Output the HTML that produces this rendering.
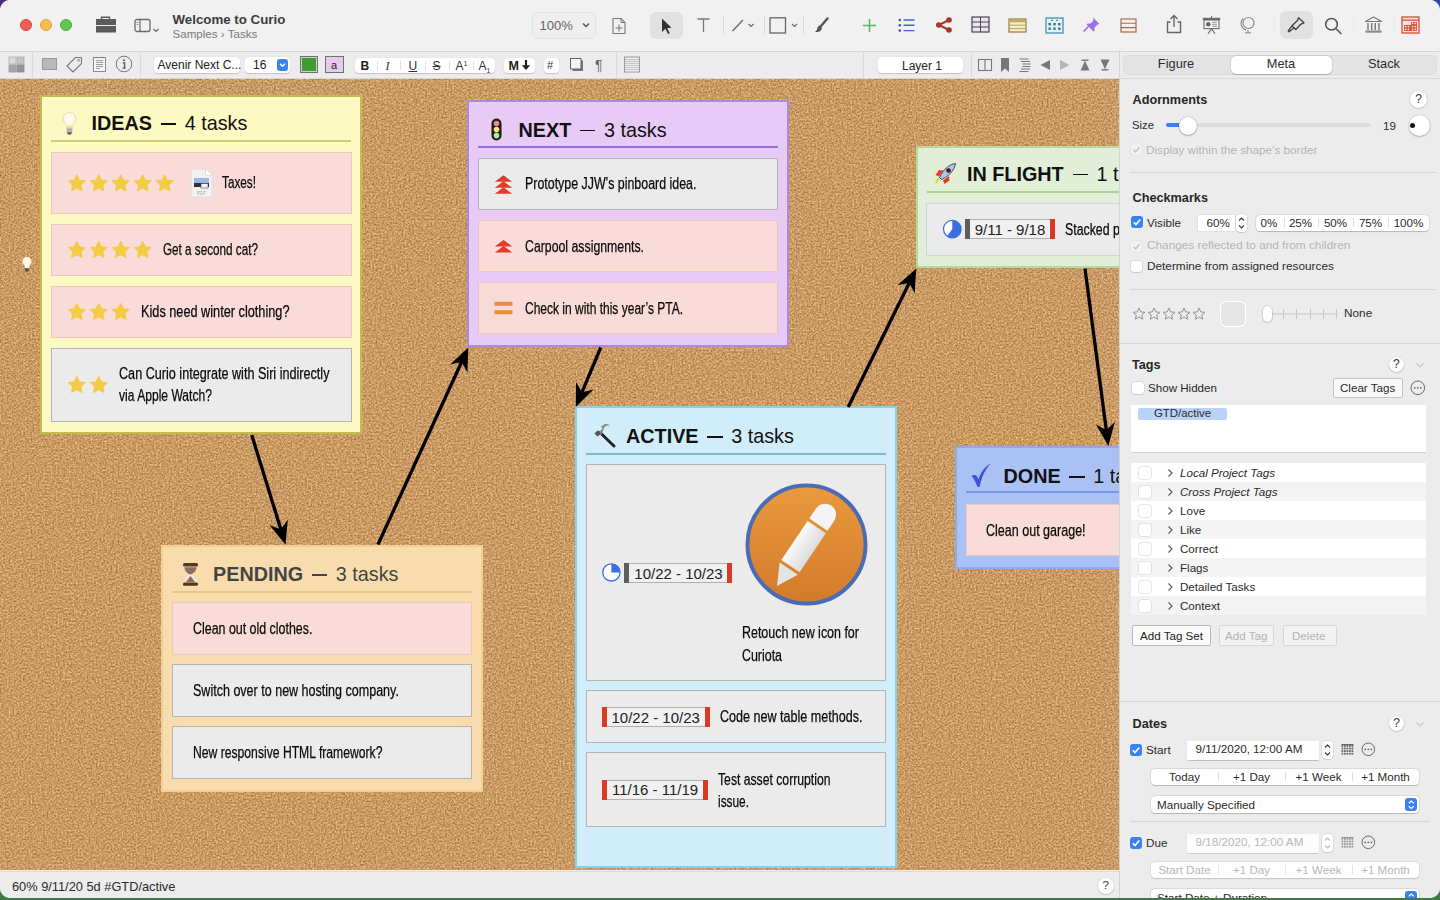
<!DOCTYPE html>
<html><head><meta charset="utf-8">
<style>
*{box-sizing:border-box;margin:0;padding:0}
html,body{width:1440px;height:900px;overflow:hidden;font-family:"Liberation Sans",sans-serif;}
body{background:linear-gradient(180deg,rgba(0,0,0,0) 50%,#3d7a42 50%),linear-gradient(90deg,#4b2f7a 0%,#3a3d8a 60%,#2f4aa8 100%);position:relative}
#desk-bottom{position:absolute;left:0;right:0;bottom:0;height:4px;background:#3f7a44}
.abs{position:absolute}
#win{position:absolute;left:0;top:0;width:1440px;height:898px;border-radius:10px;overflow:hidden;background:#ececec}
#toolbar{position:absolute;left:0;top:0;width:1440px;height:51px;background:#f0f1f0}
#fmtbar{position:absolute;left:0;top:51px;width:1119px;height:28px;background:#ececec;border-bottom:1px solid #d8d8d8}
#canvas{position:absolute;left:0;top:79px;width:1119px;height:791px;background:#c99b62;overflow:hidden}
#status{position:absolute;left:0;top:870.5px;width:1119px;height:27.5px;background:#ececec;border-top:1px solid #dcdcdc}
#sidec{position:absolute;left:0;top:0;width:1440px;height:898px;pointer-events:none}
#side{position:absolute;left:1119px;top:51px;width:321px;height:847px;background:#ececec;border-left:1px solid #d4d4d4}

#cv{position:absolute;left:0;top:79px;width:1119px;height:791px;overflow:hidden;background:#c99b62}
#cvi{position:absolute;left:0;top:-79px;width:1440px;height:900px}
.card{position:absolute;border:2px solid}
.ul{position:absolute;height:2px}
.tk{position:absolute;border:1px solid}
.pk{background:#f9dcda;border-color:#efc6b8}
.gy{background:#ebebeb;border-color:#b4b4b4}
.hd{position:absolute;margin:0.8px 0 0 -1px;font-size:19.8px;color:#111;white-space:nowrap;line-height:1}
.hd b{font-weight:bold}
.dash{display:inline-block;width:15.3px;height:1.7px;background:currentColor;vertical-align:5.6px;margin:0 8.6px 0 8.8px}
.ct{position:absolute;font-size:16px;color:#0a0a0a;-webkit-text-stroke:0.25px #0a0a0a;white-space:nowrap;line-height:1;transform-origin:0 0}
.chip{position:absolute;height:20px;background:#f2f2f2;border:1px solid #b9b9b9;border-left:5px solid #5c5c5c;border-right:5px solid #d83a2a;font-size:14.5px;color:#222;line-height:18px;padding-left:5px;white-space:nowrap}
.t{position:absolute;white-space:nowrap;line-height:1}
</style></head>
<body>
<div id="desk-bottom"></div>
<div id="win">
  <div id="toolbar">
<div class="abs" style="left:20px;top:19px;width:12px;height:12px;border-radius:50%;background:#ee5f58;border:0.5px solid #d8463f"></div>
<div class="abs" style="left:40px;top:19px;width:12px;height:12px;border-radius:50%;background:#f6bd4f;border:0.5px solid #dea236"></div>
<div class="abs" style="left:60px;top:19px;width:12px;height:12px;border-radius:50%;background:#61c554;border:0.5px solid #4fa83f"></div>
<svg class="abs" style="left:95px;top:16px" width="22" height="18" viewBox="0 0 22 18">
<path d="M6.5 3V1.2h8V3" fill="none" stroke="#5b5b5b" stroke-width="1.4"/>
<rect x="1" y="3" width="20" height="6" fill="#5b5b5b"/>
<rect x="1" y="10" width="20" height="6.5" fill="#5b5b5b"/>
</svg>
<svg class="abs" style="left:133px;top:17px" width="28" height="17" viewBox="0 0 28 17">
<rect x="2" y="2.5" width="15" height="12" rx="2" fill="none" stroke="#6a6a6a" stroke-width="1.3"/>
<line x1="7" y1="2.5" x2="7" y2="14.5" stroke="#6a6a6a" stroke-width="1.2"/>
<line x1="3.8" y1="5.5" x2="5.3" y2="5.5" stroke="#6a6a6a" stroke-width="0.9"/>
<line x1="3.8" y1="7.5" x2="5.3" y2="7.5" stroke="#6a6a6a" stroke-width="0.9"/>
<path d="M20.5 12l2.5 2.5 2.5-2.5" fill="none" stroke="#6a6a6a" stroke-width="1.2"/>
</svg>
<div class="t" style="left:172.5px;top:13px;font-size:13.3px;font-weight:bold;color:#3c3c3c">Welcome to Curio</div>
<div class="t" style="left:172.5px;top:28px;font-size:11.6px;color:#7a7a7a">Samples › Tasks</div>
<div class="abs" style="left:531.5px;top:11.5px;width:64px;height:27px;border-radius:6px;border:1px solid #e2e2e2;background:#efefef"></div>
<div class="t" style="left:539.5px;top:18.5px;font-size:13px;color:#666">100%</div>
<svg class="abs" style="left:581px;top:21px" width="10" height="8" viewBox="0 0 10 8"><path d="M2 2.5l3 3 3-3" fill="none" stroke="#555" stroke-width="1.4"/></svg>
<svg class="abs" style="left:611px;top:17px" width="17" height="18" viewBox="0 0 17 18">
<path d="M2 1.5h8l4 4v11h-12z" fill="none" stroke="#777" stroke-width="1.1"/>
<path d="M10 1.5v4h4" fill="none" stroke="#777" stroke-width="1"/>
<path d="M8 7.5v7M4.5 11h7" stroke="#777" stroke-width="1.1"/>
</svg>
<div class="abs" style="left:650px;top:11.5px;width:33px;height:27px;border-radius:6px;background:#e1e1e1"></div>
<svg class="abs" style="left:660px;top:17px" width="14" height="18" viewBox="0 0 14 18"><path d="M2 1.5l9.5 9.2-4.3.2 2.6 5.3-1.8.9-2.6-5.3L2 15z" fill="#333"/></svg>
<svg class="abs" style="left:696px;top:17px" width="15" height="16" viewBox="0 0 15 16"><path d="M1.5 2h12M7.5 2v13" stroke="#777" stroke-width="1.3" fill="none"/></svg>
<div class="abs" style="left:723px;top:15px;width:1px;height:20px;background:#dcdcdc"></div>
<svg class="abs" style="left:731px;top:17px" width="26" height="16" viewBox="0 0 26 16"><path d="M1.5 14L12 3" stroke="#666" stroke-width="1.3"/><path d="M17.5 7l2.5 2.5 2.5-2.5" fill="none" stroke="#666" stroke-width="1.2"/></svg>
<div class="abs" style="left:763.5px;top:15px;width:1px;height:20px;background:#dcdcdc"></div>
<svg class="abs" style="left:769px;top:17px" width="30" height="17" viewBox="0 0 30 17"><rect x="1" y="0.8" width="15.5" height="15.2" fill="none" stroke="#666" stroke-width="1.3"/><path d="M23 7l2.5 2.5 2.5-2.5" fill="none" stroke="#666" stroke-width="1.2"/></svg>
<div class="abs" style="left:803px;top:15px;width:1px;height:20px;background:#dcdcdc"></div>
<svg class="abs" style="left:814px;top:17px" width="15" height="16" viewBox="0 0 15 16"><path d="M13.5 1.5L7 9" stroke="#555" stroke-width="2.4" stroke-linecap="round"/><path d="M6.5 8.5c-2 0-3 1.5-3.3 3.2-.3 1.6-1.4 2.8-2.4 3.3 2.8.4 5.6-.6 6.7-2.6.6-1.2.4-2.6-1-3.9z" fill="#555"/></svg>
<svg class="abs" style="left:862px;top:18px" width="15" height="15" viewBox="0 0 15 15"><path d="M7.5 1v13M1 7.5h13" stroke="#5cb85a" stroke-width="1.5"/></svg>
<svg class="abs" style="left:898px;top:18px" width="17" height="15" viewBox="0 0 17 15">
<g fill="#3a55c8"><circle cx="1.8" cy="2" r="1.3"/><circle cx="1.8" cy="7.3" r="1.3"/><circle cx="1.8" cy="12.6" r="1.3"/></g>
<g stroke="#4a64d0" stroke-width="1.4"><path d="M5.5 2h11M5.5 7.3h11M5.5 12.6h11"/></g></svg>
<svg class="abs" style="left:935px;top:17px" width="18" height="16" viewBox="0 0 18 16">
<path d="M14 3L4 8l10 5" stroke="#a83528" stroke-width="2" fill="none"/>
<circle cx="14" cy="3" r="2.8" fill="#a83528"/><circle cx="3.8" cy="8" r="2.8" fill="#a83528"/><circle cx="14" cy="13" r="2.8" fill="#a83528"/></svg>
<svg class="abs" style="left:971px;top:16px" width="19" height="17" viewBox="0 0 19 17">
<rect x="1" y="1" width="17" height="15" fill="#ece4f0" stroke="#4a4450" stroke-width="1.2"/>
<path d="M9.5 1v15M1 6h17M1 11h17" stroke="#4a4450" stroke-width="1"/></svg>
<svg class="abs" style="left:1008px;top:18px" width="19" height="15" viewBox="0 0 19 15">
<rect x="1" y="1" width="17" height="13" fill="#f6eec8" stroke="#8f7d40" stroke-width="1.2"/>
<rect x="1.5" y="1.5" width="16" height="2.8" fill="#c0a860"/>
<path d="M1 7.2h17M1 10.6h17" stroke="#b09a58" stroke-width="0.9"/></svg>
<svg class="abs" style="left:1045px;top:17px" width="19" height="17" viewBox="0 0 19 17">
<rect x="1" y="1" width="17" height="15" fill="#e4f2f6" stroke="#3a8aa8" stroke-width="1.2"/>
<g fill="#2a7890"><rect x="3.5" y="6" width="2.4" height="2.4"/><rect x="8.3" y="6" width="2.4" height="2.4"/><rect x="13.1" y="6" width="2.4" height="2.4"/>
<rect x="3.5" y="10.5" width="2.4" height="2.4"/><rect x="8.3" y="10.5" width="2.4" height="2.4"/><rect x="13.1" y="10.5" width="2.4" height="2.4"/>
<rect x="6" y="2.8" width="2" height="1"/><rect x="11" y="2.8" width="2" height="1"/></g></svg>
<svg class="abs" style="left:1082px;top:16px" width="19" height="17" viewBox="0 0 19 17">
<path d="M11 1.5l6.5 6.5-2 .6-3 3 .2 2.8-1.2 1.2-7-7 1.2-1.2 2.8.2 3-3z" fill="#9b6fe8"/>
<path d="M6.5 10.5L1.5 15.5" stroke="#9b6fe8" stroke-width="1.6"/></svg>
<svg class="abs" style="left:1120px;top:18px" width="17" height="15" viewBox="0 0 17 15">
<rect x="1" y="1" width="15" height="13" fill="#faf0ea" stroke="#a66a50" stroke-width="1.2"/>
<path d="M1 5.3h15M1 9.6h15" stroke="#a66a50" stroke-width="1.1"/></svg>
<svg class="abs" style="left:1165px;top:14px" width="18" height="20" viewBox="0 0 18 20">
<path d="M5.5 8H2.5v10.5h13V8h-3" fill="none" stroke="#666" stroke-width="1.4"/>
<path d="M9 13V1.5M5.5 5L9 1.5 12.5 5" fill="none" stroke="#666" stroke-width="1.4"/></svg>
<svg class="abs" style="left:1202px;top:16px" width="19" height="19" viewBox="0 0 19 19">
<rect x="0.8" y="1.8" width="17.4" height="2.2" fill="#6a6a6a"/><path d="M9.5 0v2" stroke="#6a6a6a" stroke-width="1"/>
<rect x="2" y="4" width="15" height="8.6" fill="#f6f6f6" stroke="#6a6a6a" stroke-width="1.1"/>
<circle cx="6.3" cy="8.2" r="2.3" fill="#666"/><path d="M10 6.3h5M10 8.3h5M10 10.3h5" stroke="#8a8a8a" stroke-width="0.9"/>
<path d="M9.5 12.6l-3.5 5.2M9.5 12.6l3.5 5.2" stroke="#6a6a6a" stroke-width="1.1"/></svg>
<svg class="abs" style="left:1240px;top:16px" width="16" height="18" viewBox="0 0 16 18">
<circle cx="8.5" cy="7" r="5.5" fill="none" stroke="#888" stroke-width="1.2"/>
<path d="M3 2.5a7 7 0 0 0 3 11.5" fill="none" stroke="#888" stroke-width="1.1"/>
<path d="M8 14v2.5M5 16.8h6" stroke="#888" stroke-width="1.1"/></svg>
<div class="abs" style="left:1273.5px;top:15px;width:1px;height:20px;background:#e9e9e9"></div>
<div class="abs" style="left:1280px;top:11px;width:33px;height:28px;border-radius:6px;background:#e1e1e1"></div>
<svg class="abs" style="left:1286px;top:16px" width="20" height="18" viewBox="0 0 20 18">
<path d="M12.5 1.8l5.5 5-3 1.3-5.2 5.5-3.8-3.8 5.5-5.2z" fill="none" stroke="#444" stroke-width="1.4" stroke-linejoin="round"/>
<path d="M6 9.8L2.2 14.8l.8 1 5-3.8" fill="none" stroke="#444" stroke-width="1.4" stroke-linejoin="round"/></svg>
<svg class="abs" style="left:1324px;top:17px" width="19" height="18" viewBox="0 0 19 18">
<circle cx="7.5" cy="7.2" r="5.8" fill="none" stroke="#555" stroke-width="1.5"/>
<path d="M11.8 11.5l5.5 5.5" stroke="#555" stroke-width="1.6"/></svg>
<div class="abs" style="left:1353px;top:15px;width:1px;height:20px;background:#e9e9e9"></div>
<svg class="abs" style="left:1364px;top:16px" width="19" height="18" viewBox="0 0 19 18">
<path d="M9.5 1L1.5 5.5h16z" fill="none" stroke="#777" stroke-width="1.2" stroke-linejoin="round"/>
<path d="M4 7v7M7.7 7v7M11.3 7v7M15 7v7" stroke="#777" stroke-width="1.4"/>
<rect x="1.5" y="14.5" width="16" height="2.2" fill="#888"/></svg>
<div class="abs" style="left:1393.5px;top:15px;width:1px;height:20px;background:#e9e9e9"></div>
<svg class="abs" style="left:1401px;top:16px" width="19" height="18" viewBox="0 0 19 18">
<rect x="1" y="1" width="17" height="16" fill="#fce4de" stroke="#d84a32" stroke-width="1.3"/>
<path d="M1 4.2h17" stroke="#d84a32" stroke-width="1.2"/>
<g fill="#d84a32"><rect x="10" y="6" width="6" height="3"/><rect x="3" y="9" width="13" height="6"/></g>
<g fill="#fce4de"><rect x="10.8" y="6.6" width="1.6" height="1.6"/><rect x="13.6" y="6.6" width="1.6" height="1.6"/>
<rect x="3.8" y="9.8" width="1.6" height="1.6"/><rect x="6.7" y="9.8" width="1.6" height="1.6"/><rect x="10.8" y="9.8" width="1.6" height="1.6"/><rect x="13.6" y="9.8" width="1.6" height="1.6"/>
<rect x="3.8" y="12.6" width="1.6" height="1.6"/><rect x="6.7" y="12.6" width="1.6" height="1.6"/><rect x="10.8" y="12.6" width="1.6" height="1.6"/><rect x="13.6" y="12.6" width="1.6" height="1.6"/></g></svg>
</div>
  <div id="fmtbar">
<svg class="abs" style="left:8px;top:5px" width="17" height="17" viewBox="0 0 17 17">
<rect x="1" y="1" width="7" height="7" fill="#dcdcdc" stroke="#b0b0b0" stroke-width="0.8"/>
<rect x="9" y="1" width="7" height="7" fill="#c4c4c4" stroke="#aaa" stroke-width="0.8"/>
<rect x="1" y="9" width="7" height="7" fill="#a6a6a6" stroke="#999" stroke-width="0.8"/>
<rect x="9" y="9" width="7" height="7" fill="#969696" stroke="#8a8a8a" stroke-width="0.8"/></svg>
<div class="abs" style="left:32px;top:0;width:1px;height:27px;background:#dadada"></div>
<div class="abs" style="left:41.5px;top:7px;width:15.5px;height:12px;background:#b8b8b8;border:1px solid #9a9a9a"></div>
<svg class="abs" style="left:66px;top:5px" width="17" height="17" viewBox="0 0 17 17">
<path d="M9.5 1.5h6v6l-8.5 8.5-6-6z" fill="none" stroke="#7a7a7a" stroke-width="1.1" stroke-linejoin="round"/>
<circle cx="12.6" cy="4.3" r="1" fill="none" stroke="#7a7a7a" stroke-width="0.8"/></svg>
<svg class="abs" style="left:92px;top:5px" width="15" height="17" viewBox="0 0 15 17">
<rect x="1.5" y="1.5" width="12" height="14" fill="#f6f6f6" stroke="#8a8a8a" stroke-width="1"/>
<path d="M4 4.5h7M4 6.5h7M4 8.5h7M4 10.5h7M4 12.5h4" stroke="#9a9a9a" stroke-width="1"/>
<path d="M3 1v1.2M5 1v1.2M7 1v1.2M9 1v1.2M11 1v1.2" stroke="#777" stroke-width="0.7"/></svg>
<svg class="abs" style="left:115px;top:4px" width="18" height="18" viewBox="0 0 18 18">
<circle cx="9" cy="9" r="7.8" fill="none" stroke="#7a7a7a" stroke-width="1"/>
<circle cx="9" cy="5.3" r="1" fill="#555"/><path d="M7.7 7.8h1.9v5.2M7.6 13.2h3" stroke="#555" stroke-width="1.3" fill="none"/></svg>
<div class="abs" style="left:140px;top:0;width:1px;height:27px;background:#dadada"></div>
<div class="abs" style="left:154px;top:6px;width:86px;height:15.5px;border-radius:4px;background:#fff;box-shadow:0 0.5px 1px rgba(0,0,0,0.18)"></div>
<div class="t" style="left:157.5px;top:8px;font-size:12px;color:#222">Avenir Next C...</div>
<div class="abs" style="left:245px;top:6px;width:45px;height:15.5px;border-radius:4px;background:#fff;box-shadow:0 0.5px 1px rgba(0,0,0,0.18)"></div>
<div class="t" style="left:253px;top:8px;font-size:12px;color:#222">16</div>
<div class="abs" style="left:276.5px;top:8px;width:11.5px;height:12px;border-radius:3px;background:#3b82f0"></div>
<svg class="abs" style="left:277px;top:9px" width="11" height="10" viewBox="0 0 11 10"><path d="M3 3.8l2.5 2.5 2.5-2.5" fill="none" stroke="#fff" stroke-width="1.3"/></svg>
<div class="abs" style="left:299.5px;top:5px;width:18.5px;height:16.5px;background:#3f9c2e;border:1.5px solid #707070;box-shadow:inset 0 0 0 1px #d0d0d0"></div>
<div class="abs" style="left:325px;top:5px;width:19px;height:16.5px;background:#e9c8f0;border:1.5px solid #707070;box-shadow:inset 0 0 0 1px #d8d8d8"></div>
<div class="t" style="left:331px;top:8.5px;font-size:11px;color:#222">a</div>
<div class="abs" style="left:354.5px;top:6.5px;width:140px;height:15.5px;border-radius:4px;background:#fff;box-shadow:0 0.5px 1px rgba(0,0,0,0.18)"></div>
<div class="abs" style="left:377px;top:10px;width:1px;height:9px;background:#e0e0e0"></div>
<div class="abs" style="left:400px;top:10px;width:1px;height:9px;background:#e0e0e0"></div>
<div class="abs" style="left:424.5px;top:10px;width:1px;height:9px;background:#e0e0e0"></div>
<div class="abs" style="left:449px;top:10px;width:1px;height:9px;background:#e0e0e0"></div>
<div class="abs" style="left:473px;top:10px;width:1px;height:9px;background:#e0e0e0"></div>
<div class="t" style="left:360.5px;top:8.5px;font-size:12px;font-weight:bold;color:#222">B</div>
<div class="t" style="left:385.5px;top:8.5px;font-size:12px;font-style:italic;color:#333;font-family:'Liberation Serif',serif">I</div>
<div class="t" style="left:408.5px;top:8.5px;font-size:12px;text-decoration:underline;color:#333">U</div>
<div class="t" style="left:432.5px;top:8.5px;font-size:12px;text-decoration:line-through;color:#333">S</div>
<div class="t" style="left:455.5px;top:8.5px;font-size:12px;color:#333">A<span style="font-size:7px;position:relative;top:-4px">1</span></div>
<div class="t" style="left:478.5px;top:8.5px;font-size:12px;color:#333">A<span style="font-size:7px;position:relative;top:3px">1</span></div>
<div class="abs" style="left:504px;top:6.5px;width:31px;height:15.5px;border-radius:4px;background:#fff;box-shadow:0 0.5px 1px rgba(0,0,0,0.18)"></div>
<div class="t" style="left:508.5px;top:8.5px;font-size:12.5px;font-weight:bold;color:#222">M</div><svg class="abs" style="left:521px;top:8px" width="10" height="12" viewBox="0 0 10 12"><path d="M5 1v7" stroke="#222" stroke-width="2.2"/><path d="M0.8 6.2h8.4L5 11z" fill="#222"/></svg>
<div class="abs" style="left:543.5px;top:6.5px;width:15.5px;height:15.5px;border-radius:4px;background:#fff;box-shadow:0 0.5px 1px rgba(0,0,0,0.18)"></div>
<div class="t" style="left:547px;top:9px;font-size:11px;color:#333">#</div>
<svg class="abs" style="left:569px;top:6px" width="16" height="16" viewBox="0 0 16 16">
<rect x="3.5" y="3.5" width="10.5" height="10.5" fill="#777"/><rect x="1.5" y="1.5" width="10.5" height="10.5" fill="#f4f4f4" stroke="#666" stroke-width="1"/></svg>
<div class="t" style="left:595px;top:7px;font-size:14px;color:#666">¶</div>
<div class="abs" style="left:615.5px;top:0;width:1px;height:27px;background:#dadada"></div>
<svg class="abs" style="left:623px;top:5px" width="18" height="17" viewBox="0 0 18 17">
<rect x="1.5" y="1" width="15" height="15" fill="#f0f0f0" stroke="#9a9a9a" stroke-width="1"/>
<path d="M2 3.5h14M2 5.5h14M2 7.5h14M2 9.5h14M2 11.5h14M2 13.5h14" stroke="#b8b8b8" stroke-width="0.8"/></svg>
<div class="abs" style="left:863px;top:0;width:1px;height:27px;background:#dadada"></div>
<div class="abs" style="left:878px;top:6px;width:85px;height:16px;border-radius:4px;background:#fff;box-shadow:0 0.5px 1px rgba(0,0,0,0.18)"></div>
<div class="t" style="left:902px;top:8.5px;font-size:12px;color:#222">Layer 1</div>
<div class="abs" style="left:970.5px;top:0;width:1px;height:27px;background:#dadada"></div>
<svg class="abs" style="left:977px;top:7px" width="16" height="14" viewBox="0 0 16 14">
<rect x="1.5" y="1.5" width="13" height="11" fill="none" stroke="#777" stroke-width="1.1"/><path d="M8 1.5v11" stroke="#777" stroke-width="1.1"/></svg>
<svg class="abs" style="left:1000px;top:6px" width="10" height="16" viewBox="0 0 10 16"><path d="M1 1h8v14L5 11.5 1 15z" fill="#777"/></svg>
<svg class="abs" style="left:1018px;top:6px" width="14" height="16" viewBox="0 0 14 16">
<path d="M1.5 2h9M3 4.5h9M4.5 7h8M4.5 9.5h8M3 12h9M1.5 14.5h9" stroke="#777" stroke-width="1"/></svg>
<svg class="abs" style="left:1039px;top:8px" width="12" height="12" viewBox="0 0 12 12"><path d="M11 1v10L1.5 6z" fill="#777"/></svg>
<svg class="abs" style="left:1059px;top:8px" width="12" height="12" viewBox="0 0 12 12"><path d="M1 1v10L10.5 6z" fill="#b5b5b5"/></svg>
<svg class="abs" style="left:1079px;top:7px" width="12" height="14" viewBox="0 0 12 14"><path d="M2.5 2.2h7" stroke="#777" stroke-width="1.4"/><path d="M6 2.8L10.5 12.5h-9z" fill="#777"/></svg>
<svg class="abs" style="left:1099px;top:7px" width="12" height="14" viewBox="0 0 12 14"><path d="M2.5 11.8h7" stroke="#777" stroke-width="1.4"/><path d="M6 11.2L10.5 1.5h-9z" fill="#777"/></svg>
</div>
  <div id="cv"><svg class="abs" style="left:0;top:0" width="1119" height="791"><filter id="cork" x="0" y="0" width="100%" height="100%" color-interpolation-filters="sRGB"><feTurbulence type="fractalNoise" baseFrequency="0.55" numOctaves="2" seed="11"/><feColorMatrix type="matrix" values="0.48 0 0 0 0.5522  0.48 0 0 0 0.3678  0.48 0 0 0 0.1522  0 0 0 0 1"/></filter><rect width="1119" height="791" filter="url(#cork)"/></svg><div id="cvi">
<div class="card" style="left:40px;top:95px;width:322px;height:339px;background:#fcf9c2;border-color:#c3bd4e"></div>
<div class="ul" style="left:51px;top:140px;width:300px;background:#d2cf7c"></div>
<div class="hd" style="left:92.5px;top:113.5px;color:#111"><b>IDEAS</b><span class="dash"></span>4 tasks</div>
<div class="tk pk" style="left:51px;top:152px;width:301px;height:62px"></div>
<div class="tk pk" style="left:51px;top:224px;width:301px;height:52px"></div>
<div class="tk pk" style="left:51px;top:286px;width:301px;height:52px"></div>
<div class="tk gy" style="left:51px;top:348px;width:301px;height:74px"></div>
<div class="ct" style="left:222px;top:174.5px;transform:scaleX(0.735)">Taxes!</div>
<div class="ct" style="left:163px;top:241.5px;transform:scaleX(0.731)">Get a second cat?</div>
<div class="ct" style="left:141px;top:303.5px;transform:scaleX(0.795)">Kids need winter clothing?</div>
<div class="ct" style="left:119px;top:365.5px;transform:scaleX(0.789)">Can Curio integrate with Siri indirectly</div>
<div class="ct" style="left:119px;top:387.5px;transform:scaleX(0.755)">via Apple Watch?</div>
<div class="card" style="left:467px;top:100px;width:322px;height:247px;background:#e8caf7;border-color:#a78bdf"></div>
<div class="ul" style="left:478px;top:146px;width:300px;background:#8f70dc"></div>
<div class="hd" style="left:519.5px;top:120.0px;color:#111"><b>NEXT</b><span class="dash"></span>3 tasks</div>
<div class="tk gy" style="left:478px;top:158px;width:300px;height:52px"></div>
<div class="tk pk" style="left:478px;top:220px;width:300px;height:52px"></div>
<div class="tk pk" style="left:478px;top:282px;width:300px;height:52px"></div>
<div class="ct" style="left:524.5px;top:176.0px;transform:scaleX(0.775)">Prototype JJW’s pinboard idea.</div>
<div class="ct" style="left:524.5px;top:238.5px;transform:scaleX(0.769)">Carpool assignments.</div>
<div class="ct" style="left:524.5px;top:300.5px;transform:scaleX(0.75)">Check in with this year’s PTA.</div>
<div class="card" style="left:575px;top:406px;width:322px;height:462px;background:#d1edfa;border-color:#8fcde8"></div>
<div class="ul" style="left:586px;top:453px;width:300px;background:#80b9d4"></div>
<div class="hd" style="left:627px;top:426.3px;color:#111"><b>ACTIVE</b><span class="dash"></span>3 tasks</div>
<div class="tk gy" style="left:586px;top:464px;width:300px;height:217px"></div>
<div class="tk gy" style="left:586px;top:690px;width:300px;height:53px"></div>
<div class="tk gy" style="left:586px;top:752px;width:300px;height:75px"></div>
<div class="ct" style="left:742.4px;top:624.5px;transform:scaleX(0.778)">Retouch new icon for</div>
<div class="ct" style="left:742.4px;top:647.5px;transform:scaleX(0.776)">Curiota</div>
<div class="ct" style="left:719.5px;top:708.5px;transform:scaleX(0.785)">Code new table methods.</div>
<div class="ct" style="left:718px;top:771.5px;transform:scaleX(0.762)">Test asset corruption</div>
<div class="ct" style="left:718px;top:793.5px;transform:scaleX(0.74)">issue.</div>
<div class="card" style="left:161px;top:545px;width:322px;height:247px;background:#f8dcae;border-color:#f3ce96"></div>
<div class="ul" style="left:172px;top:590.5px;width:300px;background:#e9c687"></div>
<div class="hd" style="left:214px;top:564.5px;color:#444"><b>PENDING</b><span class="dash"></span>3 tasks</div>
<div class="tk pk" style="left:172px;top:602px;width:300px;height:53px"></div>
<div class="tk gy" style="left:172px;top:664px;width:300px;height:53px"></div>
<div class="tk gy" style="left:172px;top:726px;width:300px;height:53px"></div>
<div class="ct" style="left:192.6px;top:620.5px;transform:scaleX(0.776)">Clean out old clothes.</div>
<div class="ct" style="left:192.6px;top:682.5px;transform:scaleX(0.783)">Switch over to new hosting company.</div>
<div class="ct" style="left:192.6px;top:744.5px;transform:scaleX(0.76)">New responsive HTML framework?</div>
<div class="card" style="left:916px;top:146px;width:322px;height:122px;background:#e2eed8;border-color:#b3dc9c"></div>
<div class="ul" style="left:927px;top:191px;width:300px;background:#a6d490"></div>
<div class="hd" style="left:968px;top:164.2px;color:#111"><b>IN FLIGHT</b><span class="dash"></span>1 task</div>
<div class="tk gy" style="left:926px;top:203px;width:300px;height:53px;border-color:#c6d5ef"></div>
<div class="ct" style="left:1064.7px;top:221.5px;transform:scaleX(0.77)">Stacked projects</div>
<div class="card" style="left:955px;top:446px;width:322px;height:123px;background:#a9c1f5;border-color:#91a9ee"></div>
<div class="ul" style="left:966px;top:491px;width:300px;background:#7a98e6"></div>
<div class="hd" style="left:1004.5px;top:466.3px;color:#111"><b>DONE</b><span class="dash"></span>1 task</div>
<div class="tk pk" style="left:966px;top:504px;width:300px;height:52px"></div>
<div class="ct" style="left:986px;top:522.5px;transform:scaleX(0.783)">Clean out garage!</div>
<svg class="abs" style="left:0;top:0" width="1119" height="900" viewBox="0 0 1119 900">
<polygon points="76.80,175.00 79.27,180.20 84.98,180.94 80.79,184.90 81.85,190.56 76.80,187.80 71.75,190.56 72.81,184.90 68.62,180.94 74.33,180.20" fill="#f4cb45" stroke="#f4cb45" stroke-width="1.3" stroke-linejoin="round"/>
<polygon points="98.75,175.00 101.22,180.20 106.93,180.94 102.74,184.90 103.80,190.56 98.75,187.80 93.70,190.56 94.76,184.90 90.57,180.94 96.28,180.20" fill="#f4cb45" stroke="#f4cb45" stroke-width="1.3" stroke-linejoin="round"/>
<polygon points="120.70,175.00 123.17,180.20 128.88,180.94 124.69,184.90 125.75,190.56 120.70,187.80 115.65,190.56 116.71,184.90 112.52,180.94 118.23,180.20" fill="#f4cb45" stroke="#f4cb45" stroke-width="1.3" stroke-linejoin="round"/>
<polygon points="142.65,175.00 145.12,180.20 150.83,180.94 146.64,184.90 147.70,190.56 142.65,187.80 137.60,190.56 138.66,184.90 134.47,180.94 140.18,180.20" fill="#f4cb45" stroke="#f4cb45" stroke-width="1.3" stroke-linejoin="round"/>
<polygon points="164.60,175.00 167.07,180.20 172.78,180.94 168.59,184.90 169.65,190.56 164.60,187.80 159.55,190.56 160.61,184.90 156.42,180.94 162.13,180.20" fill="#f4cb45" stroke="#f4cb45" stroke-width="1.3" stroke-linejoin="round"/>
<polygon points="76.80,241.70 79.27,246.90 84.98,247.64 80.79,251.60 81.85,257.26 76.80,254.50 71.75,257.26 72.81,251.60 68.62,247.64 74.33,246.90" fill="#f4cb45" stroke="#f4cb45" stroke-width="1.3" stroke-linejoin="round"/>
<polygon points="98.75,241.70 101.22,246.90 106.93,247.64 102.74,251.60 103.80,257.26 98.75,254.50 93.70,257.26 94.76,251.60 90.57,247.64 96.28,246.90" fill="#f4cb45" stroke="#f4cb45" stroke-width="1.3" stroke-linejoin="round"/>
<polygon points="120.70,241.70 123.17,246.90 128.88,247.64 124.69,251.60 125.75,257.26 120.70,254.50 115.65,257.26 116.71,251.60 112.52,247.64 118.23,246.90" fill="#f4cb45" stroke="#f4cb45" stroke-width="1.3" stroke-linejoin="round"/>
<polygon points="142.65,241.70 145.12,246.90 150.83,247.64 146.64,251.60 147.70,257.26 142.65,254.50 137.60,257.26 138.66,251.60 134.47,247.64 140.18,246.90" fill="#f4cb45" stroke="#f4cb45" stroke-width="1.3" stroke-linejoin="round"/>
<polygon points="76.80,303.70 79.27,308.90 84.98,309.64 80.79,313.60 81.85,319.26 76.80,316.50 71.75,319.26 72.81,313.60 68.62,309.64 74.33,308.90" fill="#f4cb45" stroke="#f4cb45" stroke-width="1.3" stroke-linejoin="round"/>
<polygon points="98.75,303.70 101.22,308.90 106.93,309.64 102.74,313.60 103.80,319.26 98.75,316.50 93.70,319.26 94.76,313.60 90.57,309.64 96.28,308.90" fill="#f4cb45" stroke="#f4cb45" stroke-width="1.3" stroke-linejoin="round"/>
<polygon points="120.70,303.70 123.17,308.90 128.88,309.64 124.69,313.60 125.75,319.26 120.70,316.50 115.65,319.26 116.71,313.60 112.52,309.64 118.23,308.90" fill="#f4cb45" stroke="#f4cb45" stroke-width="1.3" stroke-linejoin="round"/>
<polygon points="76.80,376.70 79.27,381.90 84.98,382.64 80.79,386.60 81.85,392.26 76.80,389.50 71.75,392.26 72.81,386.60 68.62,382.64 74.33,381.90" fill="#f4cb45" stroke="#f4cb45" stroke-width="1.3" stroke-linejoin="round"/>
<polygon points="98.75,376.70 101.22,381.90 106.93,382.64 102.74,386.60 103.80,392.26 98.75,389.50 93.70,392.26 94.76,386.60 90.57,382.64 96.28,381.90" fill="#f4cb45" stroke="#f4cb45" stroke-width="1.3" stroke-linejoin="round"/>
<polygon points="494.75,181.8 503.5,175.3 512.25,181.8" fill="#e23b2b"/>
<polygon points="494.75,187.8 503.5,181.3 512.25,187.8" fill="#e23b2b"/>
<polygon points="494.75,193.8 503.5,187.3 512.25,193.8" fill="#e23b2b"/>
<polygon points="494.75,246.5 503.5,240 512.25,246.5" fill="#e23b2b"/>
<polygon points="494.75,252.5 503.5,246 512.25,252.5" fill="#e23b2b"/>
<rect x="494.5" y="301.8" width="18" height="4" fill="#ee8a3c"/><rect x="494.5" y="310.2" width="18" height="4" fill="#ee8a3c"/>
<circle cx="611.4" cy="572.4" r="8.6" fill="#fff" stroke="#3a6fe0" stroke-width="1.3"/><path d="M611.4,572.4 L611.4,563.8 A8.6,8.6 0 0 1 620.00,572.40 Z" fill="#3a6fe0"/>
<circle cx="952.3" cy="229.1" r="8.8" fill="#fff" stroke="#3a6fe0" stroke-width="1.3"/><path d="M952.3,229.1 L952.3,220.29999999999998 A8.8,8.8 0 1 1 947.13,236.22 Z" fill="#3a6fe0"/>
<line x1="251.7" y1="435" x2="280.8" y2="529.2" stroke="#000" stroke-width="3.3"/><polygon points="285.5,544.5 269.6,525.3 280.8,529.2 287.8,519.7" fill="#000"/>
<line x1="378" y1="544.5" x2="461.6" y2="362.0" stroke="#000" stroke-width="3.3"/><polygon points="468.3,347.5 467.4,372.4 461.6,362.0 450.1,364.4" fill="#000"/>
<line x1="600.8" y1="347.5" x2="582.0" y2="392.2" stroke="#000" stroke-width="3.3"/><polygon points="575.8,407 576.0,382.1 582.0,392.2 593.5,389.5" fill="#000"/>
<line x1="848.2" y1="407" x2="909.2" y2="282.9" stroke="#000" stroke-width="3.3"/><polygon points="916.3,268.5 914.7,293.3 909.2,282.9 897.6,284.9" fill="#000"/>
<line x1="1085" y1="268.5" x2="1106.3" y2="430.1" stroke="#000" stroke-width="3.3"/><polygon points="1108.4,446 1096.0,424.4 1106.3,430.1 1114.8,422.0" fill="#000"/>
</svg>
<div class="abs" style="left:624.2px;top:563px;width:107.79999999999995px;height:20px;background:#f1f1f1;border-top:1px solid #b0b0b0;border-bottom:1px solid #b0b0b0"></div><div class="abs" style="left:624.2px;top:563px;width:4.6px;height:20px;background:#5e5e5e"></div><div class="abs" style="left:727px;top:563px;width:5px;height:20px;background:#dc3a26"></div><div class="t" style="left:634.3px;top:565.8px;font-size:15px;color:#222">10/22 - 10/23</div>
<div class="abs" style="left:602px;top:707px;width:107.70000000000005px;height:20px;background:#f1f1f1;border-top:1px solid #b0b0b0;border-bottom:1px solid #b0b0b0"></div><div class="abs" style="left:602px;top:707px;width:4.6px;height:20px;background:#dc3a26"></div><div class="abs" style="left:704.7px;top:707px;width:5px;height:20px;background:#dc3a26"></div><div class="t" style="left:611.5px;top:709.8px;font-size:15px;color:#222">10/22 - 10/23</div>
<div class="abs" style="left:602px;top:779.5px;width:106px;height:20px;background:#f1f1f1;border-top:1px solid #b0b0b0;border-bottom:1px solid #b0b0b0"></div><div class="abs" style="left:602px;top:779.5px;width:4.6px;height:20px;background:#dc3a26"></div><div class="abs" style="left:703px;top:779.5px;width:5px;height:20px;background:#dc3a26"></div><div class="t" style="left:612px;top:782.3px;font-size:15px;color:#222">11/16 - 11/19</div>
<div class="abs" style="left:965.2px;top:219px;width:89.79999999999995px;height:20px;background:#f1f1f1;border-top:1px solid #b0b0b0;border-bottom:1px solid #b0b0b0"></div><div class="abs" style="left:965.2px;top:219px;width:4.6px;height:20px;background:#5e5e5e"></div><div class="abs" style="left:1050px;top:219px;width:5px;height:20px;background:#dc3a26"></div><div class="t" style="left:974.7px;top:221.8px;font-size:15px;color:#222">9/11 - 9/18</div>
<svg class="abs" style="left:744px;top:482px" width="126" height="126" viewBox="0 0 126 126">
<defs><linearGradient id="og" x1="0" y1="0" x2="0" y2="1"><stop offset="0" stop-color="#ea9a3e"/><stop offset="1" stop-color="#d27a2a"/></linearGradient>
<linearGradient id="pg" x1="0" y1="0" x2="0" y2="1"><stop offset="0" stop-color="#fafafa"/><stop offset="1" stop-color="#dcdcdc"/></linearGradient></defs>
<circle cx="62.5" cy="62.5" r="59" fill="url(#og)" stroke="#4a6cb4" stroke-width="4"/>
<g transform="translate(33,104) rotate(-56)">
<polygon points="0,0 21,-11 21,11" fill="#e4e4e4"/>
<rect x="24" y="-11" width="47" height="22" fill="url(#pg)"/>
<path d="M74,-11 H86 A11,11 0 0 1 86,11 H74 Z" fill="#f4f4f4"/>
</g></svg>
<svg class="abs" style="left:61px;top:111px" width="17" height="25" viewBox="0 0 17 25">
<defs><radialGradient id="bg1" cx="0.5" cy="0.4" r="0.55"><stop offset="0" stop-color="#fff"/><stop offset="0.7" stop-color="#fdf8e0"/><stop offset="1" stop-color="#e8dc98"/></radialGradient></defs>
<path d="M8.5 1.5C4.6 1.5 2 4.3 2 7.8c0 2.6 1.6 4.2 2.7 5.8.8 1.2 1 2.5 1 3.7h5.6c0-1.2.2-2.5 1-3.7 1.1-1.6 2.7-3.2 2.7-5.8 0-3.5-2.6-6.3-6.5-6.3z" fill="url(#bg1)" stroke="#e6d890" stroke-width="0.6"/>
<rect x="5.6" y="17.3" width="5.8" height="4" fill="#b8b4a8"/><path d="M6 21.3h5l-1 2.2H7z" fill="#555"/></svg>
<svg class="abs" style="left:491px;top:117.5px" width="11" height="23" viewBox="0 0 11 23">
<rect x="0.5" y="0.5" width="10" height="22" rx="5" fill="#1c1c1c"/>
<circle cx="5.5" cy="5.5" r="2.8" fill="#f08a8a"/><circle cx="5.5" cy="11.6" r="2.8" fill="#f2e67a"/><circle cx="5.5" cy="17.6" r="2.8" fill="#a8f090"/></svg>
<svg class="abs" style="left:590px;top:421px" width="28" height="28" viewBox="0 0 28 28">
<path d="M10 11.5l14 13.5" stroke="#222" stroke-width="3" stroke-linecap="round"/>
<path d="M8 12.2l4.5-4.6-1.5-2 3.5-2.4c2.5-.4 4.6.4 5.5 1.5-2.2-.5-4.3 0-5.5 1.3L11.5 13.5 7.5 15z" fill="#8a8488"/>
<path d="M4.5 12.5l3.2-3.2 3 3-3.2 3.2z" fill="#555"/></svg>
<svg class="abs" style="left:182px;top:561.5px" width="17" height="25" viewBox="0 0 17 25">
<rect x="1" y="1" width="15" height="3.4" rx="1.5" fill="#5a3420"/>
<path d="M2.5 5.3h12c0 4.5-3.5 6-5.2 7.2h-1.6C6 11.3 2.5 9.8 2.5 5.3z" fill="#8a7060"/>
<path d="M7.7 12.5C6 13.7 2.5 15.2 2.5 20h12c0-4.8-3.5-6.3-5.2-7.5z" fill="#e8e8ee"/>
<path d="M8.5 14l-4.5 6h9z" fill="#9a6a40"/>
<rect x="1" y="20.4" width="15" height="3.4" rx="1.5" fill="#5a3420"/></svg>
<svg class="abs" style="left:932px;top:161px" width="26" height="26" viewBox="0 0 26 26">
<path d="M7 15.5L3.5 14l3.5-5 4.5.5z" fill="#e8402a"/>
<path d="M11 19.5l1.5 3.5 5-3.5-.5-4.5z" fill="#e03a28"/>
<path d="M8 18.5l-5 5.5 1.5-6 2-1.5z" fill="#f5d040"/>
<path d="M7.5 16.5C11 9 16.5 3.5 23.5 2.5c-1 7-6.5 12.5-14 16z" fill="#a8c8e8" stroke="#3a3a5a" stroke-width="0.9"/>
<circle cx="16.5" cy="9.5" r="2.3" fill="#5a1010"/></svg>
<svg class="abs" style="left:970px;top:462px" width="24" height="26" viewBox="0 0 24 26">
<path d="M1.5 14c1.5-1.2 3.5-1.5 4.6-.6 1 .8 1.7 2.3 2.3 4.2C10.5 10.5 15 4 21.5 1.3c-5.5 4.5-9.5 12-11.8 23.5-1.3.3-1.8.3-2.4-.2C5.8 20.5 4.2 17 1.5 14z" fill="#3a56d6"/></svg>
<svg class="abs" style="left:21px;top:256px" width="12" height="17" viewBox="0 0 12 17">
<path d="M6 1C3.2 1 1.5 3 1.5 5.3c0 1.8 1.1 2.9 1.8 4 .5.8.7 1.7.7 2.6h4c0-.9.2-1.8.7-2.6.7-1.1 1.8-2.2 1.8-4C10.5 3 8.8 1 6 1z" fill="#fcf6e4"/>
<path d="M4.2 12.2h3.6v2.2l-1 1.3H5.2l-1-1.3z" fill="#555"/></svg>
<svg class="abs" style="left:189.5px;top:168px" width="23" height="30" viewBox="0 0 23 30">
<path d="M1 1h14.5l6.5 6.5V29H1z" fill="#f2f2f4" stroke="#dadade" stroke-width="0.8"/>
<path d="M15.5 1v6.5H22" fill="#fff" stroke="#d8d8dc" stroke-width="0.8"/>
<rect x="4" y="10" width="15" height="5" fill="#9cb8e8"/><rect x="4" y="15" width="15" height="4" fill="#2a3040"/>
<rect x="11" y="15.5" width="7" height="4.5" fill="#f4f4f4" stroke="#333" stroke-width="0.5"/>
<text x="11.5" y="26.5" font-size="4.5" fill="#aaa" text-anchor="middle" font-family="Liberation Sans">PDF</text></svg>
</div></div>
  <div id="status">
<div class="t" style="left:12px;top:9px;font-size:12.8px;color:#2a2a2a">60% 9/11/20 5d #GTD/active</div>
<div class="abs" style="left:1098px;top:6.5px;width:15.5px;height:15.5px;border-radius:50%;background:#fff;box-shadow:0 0.5px 1.5px rgba(0,0,0,0.3)"></div>
<div class="t" style="left:1098px;top:8px;width:15.5px;text-align:center;font-size:11.5px;color:#333">?</div>
</div>
  <div id="side"></div>
<div class="abs" style="left:0;top:51px;width:1440px;height:1px;background:#d6d6d6"></div>
<div id="sidec">
<div class="abs" style="left:1119px;top:78px;width:321px;height:1px;background:#d8d8d8"></div>
<div class="abs" style="left:1122.5px;top:54.5px;width:314.0px;height:20.5px;border-radius:6px;background:#e3e3e3;box-shadow:inset 0 0 0 0.5px #d4d4d4;"></div>
<div class="abs" style="left:1231px;top:55.5px;width:100.5px;height:18.5px;border-radius:5px;background:#fff;box-shadow:0 0 0 0.5px rgba(0,0,0,0.12),0 0.5px 1px rgba(0,0,0,0.18);"></div>
<div class="t" style="left:1126.0px;top:58.2px;width:100px;text-align:center;font-size:12.8px;color:#2c2c2c;">Figure</div>
<div class="t" style="left:1231.0px;top:58.2px;width:100px;text-align:center;font-size:12.8px;color:#2c2c2c;">Meta</div>
<div class="t" style="left:1334.0px;top:58.2px;width:100px;text-align:center;font-size:12.8px;color:#2c2c2c;">Stack</div>
<div class="t" style="left:1132.5px;top:94.2px;font-size:12.7px;color:#262626;font-weight:bold">Adornments</div>
<div class="abs" style="left:1410.2px;top:91.1px;width:17.0px;height:17.0px;border-radius:50%;background:#fff;box-shadow:0 0.5px 1.5px rgba(0,0,0,0.3)"></div><div class="t" style="left:1410.2px;top:93.1px;width:17.0px;text-align:center;font-size:12px;color:#333">?</div>
<div class="t" style="left:1132px;top:119.9px;font-size:11.3px;color:#2a2a2a;">Size</div>
<div class="abs" style="left:1166px;top:123px;width:204px;height:4px;border-radius:2px;background:#dcdcdc"></div>
<div class="abs" style="left:1166px;top:123px;width:24px;height:4px;border-radius:2px;background:#3a82f2"></div>
<div class="abs" style="left:1179px;top:116.5px;width:18px;height:18px;border-radius:50%;background:#fff;box-shadow:0 0 0 0.5px rgba(0,0,0,0.15),0 1px 2px rgba(0,0,0,0.25)"></div>
<div class="t" style="left:1383px;top:119.7px;font-size:11.6px;color:#2a2a2a;">19</div>
<div class="abs" style="left:1408.5px;top:115px;width:21px;height:21px;border-radius:50%;background:#fff;box-shadow:0 0 0 0.5px rgba(0,0,0,0.12),0 1px 2px rgba(0,0,0,0.22)"></div>
<div class="abs" style="left:1409.5px;top:123px;width:5px;height:5px;border-radius:50%;background:#111"></div>
<div class="abs" style="left:1130.5px;top:143.9px;width:11px;height:11px;border-radius:3px;background:#f2f2f2;box-shadow:0 0 0 0.5px #ddd"></div><svg class="abs" style="left:1130.5px;top:143.9px" width="11" height="11" viewBox="0 0 12 12"><path d="M2.8 6.2l2.2 2.4 4.3-5.2" fill="none" stroke="#c0c0c0" stroke-width="1.5"/></svg>
<div class="t" style="left:1146px;top:143.6px;font-size:11.7px;color:#b4b4b4;">Display within the shape’s border</div>
<div class="abs" style="left:1130px;top:172px;width:306px;height:1px;background:#d6d6d6"></div>
<div class="t" style="left:1132.5px;top:191.7px;font-size:12.7px;color:#262626;font-weight:bold">Checkmarks</div>
<div class="abs" style="left:1131px;top:216.2px;width:12px;height:12px;border-radius:3px;background:#3a82f2"></div><svg class="abs" style="left:1131px;top:216.2px" width="12" height="12" viewBox="0 0 12 12"><path d="M2.8 6.2l2.2 2.4 4.3-5.2" fill="none" stroke="#fff" stroke-width="1.6"/></svg>
<div class="t" style="left:1147px;top:216.6px;font-size:11.6px;color:#2a2a2a;">Visible</div>
<div class="abs" style="left:1197.5px;top:215px;width:37.5px;height:16px;border-radius:0px;background:#fff;box-shadow:0 0 0 0.5px rgba(0,0,0,0.08)"></div>
<div class="t" style="left:1206.5px;top:216.8px;font-size:11.6px;color:#2a2a2a;">60%</div>
<div class="abs" style="left:1235.5px;top:213.5px;width:11px;height:18px;border-radius:4px;background:#fff;box-shadow:0 0 0 0.5px rgba(0,0,0,0.1),0 0.5px 1px rgba(0,0,0,0.18)"></div><svg class="abs" style="left:1235.5px;top:213.5px" width="11" height="18" viewBox="0 0 11 18"><path d="M3 6.5l2.5-2.5 2.5 2.5M3 11.5l2.5 2.5 2.5-2.5" fill="none" stroke="#333" stroke-width="1.1"/></svg>
<div class="abs" style="left:1256px;top:215px;width:173px;height:15.5px;border-radius:4px;background:#fff;box-shadow:0 0 0 0.5px rgba(0,0,0,0.12),0 0.5px 1px rgba(0,0,0,0.18);"></div>
<div class="t" style="left:1249.0px;top:216.8px;width:40px;text-align:center;font-size:11.6px;color:#2a2a2a;">0%</div>
<div class="t" style="left:1280.5px;top:216.8px;width:40px;text-align:center;font-size:11.6px;color:#2a2a2a;">25%</div>
<div class="t" style="left:1315.5px;top:216.8px;width:40px;text-align:center;font-size:11.6px;color:#2a2a2a;">50%</div>
<div class="t" style="left:1350.5px;top:216.8px;width:40px;text-align:center;font-size:11.6px;color:#2a2a2a;">75%</div>
<div class="t" style="left:1388.5px;top:216.8px;width:40px;text-align:center;font-size:11.6px;color:#2a2a2a;">100%</div>
<div class="abs" style="left:1283.5px;top:218px;width:1px;height:9px;background:#dedede"></div>
<div class="abs" style="left:1318px;top:218px;width:1px;height:9px;background:#dedede"></div>
<div class="abs" style="left:1353px;top:218px;width:1px;height:9px;background:#dedede"></div>
<div class="abs" style="left:1388px;top:218px;width:1px;height:9px;background:#dedede"></div>
<div class="abs" style="left:1131px;top:240.7px;width:11px;height:11px;border-radius:3px;background:#f2f2f2;box-shadow:0 0 0 0.5px #ddd"></div><svg class="abs" style="left:1131px;top:240.7px" width="11" height="11" viewBox="0 0 12 12"><path d="M2.8 6.2l2.2 2.4 4.3-5.2" fill="none" stroke="#c0c0c0" stroke-width="1.5"/></svg>
<div class="t" style="left:1147px;top:240.3px;font-size:11.8px;color:#b4b4b4;">Changes reflected to and from children</div>
<div class="abs" style="left:1131px;top:260.9px;width:11px;height:11px;border-radius:3px;background:#fff;box-shadow:0 0 0 0.5px #c8c8c8, 0 0.5px 1px rgba(0,0,0,0.12)"></div>
<div class="t" style="left:1147px;top:260.5px;font-size:11.8px;color:#2a2a2a;">Determine from assigned resources</div>
<div class="abs" style="left:1130px;top:289px;width:306px;height:1px;background:#d6d6d6"></div>
<svg class="abs" style="left:1132px;top:306.5px" width="14" height="14" viewBox="0 0 14 14"><path d="M7 1l1.7 3.9 4.2.4-3.2 2.8 1 4.1L7 10 3.3 12.2l1-4.1L1.1 5.3l4.2-.4z" fill="none" stroke="#8a8a8a" stroke-width="0.9" stroke-linejoin="round"/></svg>
<svg class="abs" style="left:1147px;top:306.5px" width="14" height="14" viewBox="0 0 14 14"><path d="M7 1l1.7 3.9 4.2.4-3.2 2.8 1 4.1L7 10 3.3 12.2l1-4.1L1.1 5.3l4.2-.4z" fill="none" stroke="#8a8a8a" stroke-width="0.9" stroke-linejoin="round"/></svg>
<svg class="abs" style="left:1162px;top:306.5px" width="14" height="14" viewBox="0 0 14 14"><path d="M7 1l1.7 3.9 4.2.4-3.2 2.8 1 4.1L7 10 3.3 12.2l1-4.1L1.1 5.3l4.2-.4z" fill="none" stroke="#8a8a8a" stroke-width="0.9" stroke-linejoin="round"/></svg>
<svg class="abs" style="left:1177px;top:306.5px" width="14" height="14" viewBox="0 0 14 14"><path d="M7 1l1.7 3.9 4.2.4-3.2 2.8 1 4.1L7 10 3.3 12.2l1-4.1L1.1 5.3l4.2-.4z" fill="none" stroke="#8a8a8a" stroke-width="0.9" stroke-linejoin="round"/></svg>
<svg class="abs" style="left:1192px;top:306.5px" width="14" height="14" viewBox="0 0 14 14"><path d="M7 1l1.7 3.9 4.2.4-3.2 2.8 1 4.1L7 10 3.3 12.2l1-4.1L1.1 5.3l4.2-.4z" fill="none" stroke="#8a8a8a" stroke-width="0.9" stroke-linejoin="round"/></svg>
<div class="abs" style="left:1221px;top:302px;width:24px;height:24px;border-radius:5px;background:#e6e6e6;box-shadow:0 0 0 1.5px #fff,0 0 0 2px #dadada"></div>
<div class="abs" style="left:1266px;top:312.5px;width:70px;height:2px;background:#dadada"></div>
<div class="abs" style="left:1270.0px;top:308.5px;width:1px;height:10px;background:#c8c8c8"></div>
<div class="abs" style="left:1283.2px;top:308.5px;width:1px;height:10px;background:#c8c8c8"></div>
<div class="abs" style="left:1296.4px;top:308.5px;width:1px;height:10px;background:#c8c8c8"></div>
<div class="abs" style="left:1309.6px;top:308.5px;width:1px;height:10px;background:#c8c8c8"></div>
<div class="abs" style="left:1322.8px;top:308.5px;width:1px;height:10px;background:#c8c8c8"></div>
<div class="abs" style="left:1336.0px;top:308.5px;width:1px;height:10px;background:#c8c8c8"></div>
<div class="abs" style="left:1262.5px;top:306px;width:9px;height:16px;border-radius:4.5px;background:#fff;box-shadow:0 0 0 0.5px rgba(0,0,0,0.15),0 0.5px 1.5px rgba(0,0,0,0.25)"></div>
<div class="t" style="left:1344px;top:307.5px;font-size:11.8px;color:#2a2a2a;">None</div>
<div class="abs" style="left:1119px;top:342.5px;width:321px;height:1px;background:#d6d6d6"></div>
<div class="t" style="left:1132px;top:359.2px;font-size:12.7px;color:#262626;font-weight:bold">Tags</div>
<div class="abs" style="left:1388.8px;top:357.0px;width:15.0px;height:15.0px;border-radius:50%;background:#fff;box-shadow:0 0.5px 1.5px rgba(0,0,0,0.3)"></div><div class="t" style="left:1388.8px;top:358.0px;width:15.0px;text-align:center;font-size:12px;color:#333">?</div>
<svg class="abs" style="left:1414.5px;top:361px" width="10" height="8" viewBox="0 0 10 8"><path d="M1.5 2.5L5 6l3.5-3.5" fill="none" stroke="#c4c4c4" stroke-width="1.2"/></svg>
<div class="abs" style="left:1132px;top:382.25px;width:11.5px;height:11.5px;border-radius:3px;background:#fff;box-shadow:0 0 0 0.5px #c8c8c8, 0 0.5px 1px rgba(0,0,0,0.12)"></div>
<div class="t" style="left:1148px;top:382.4px;font-size:11.6px;color:#2a2a2a;">Show Hidden</div>
<div class="abs" style="left:1333px;top:377.5px;width:69.5px;height:20.0px;border-radius:2px;background:#f9f9f9;border:1px solid #c4c4c4"></div>
<div class="t" style="left:1340px;top:382.2px;font-size:11.6px;color:#2a2a2a;">Clear Tags</div>
<svg class="abs" style="left:1410.2px;top:380.2px" width="15.6" height="15.6" viewBox="0 0 15.6 15.6"><circle cx="7.8" cy="7.8" r="6.8" fill="none" stroke="#666" stroke-width="1"/><circle cx="4.8" cy="7.8" r="0.9" fill="#666"/><circle cx="7.8" cy="7.8" r="0.9" fill="#666"/><circle cx="10.8" cy="7.8" r="0.9" fill="#666"/></svg>
<div class="abs" style="left:1130.5px;top:404.5px;width:295.5px;height:48.5px;border-radius:0px;background:#fff;border-bottom:1px solid #d0d0d0"></div>
<div class="abs" style="left:1138px;top:407.5px;width:89px;height:12px;border-radius:2px;background:#bad2f8"></div>
<div class="t" style="left:1154px;top:407.8px;font-size:11.4px;color:#2a2a2a;">GTD/active</div>
<div class="abs" style="left:1130.5px;top:462.5px;width:295.5px;height:152.0px;border-radius:0px;background:#fff;border:1px solid #e4e4e4"></div>
<div class="abs" style="left:1131px;top:463px;width:294.5px;height:19px;background:#fff"></div>
<div class="abs" style="left:1139px;top:466.5px;width:12px;height:12px;border-radius:2.5px;background:#fff;box-shadow:0 0 0 0.5px #d0d0d0"></div>
<svg class="abs" style="left:1166px;top:467.5px" width="8" height="10" viewBox="0 0 8 10"><path d="M2.5 1.5L6 5 2.5 8.5" fill="none" stroke="#555" stroke-width="1.1"/></svg>
<div class="t" style="left:1180px;top:466.7px;font-size:11.6px;color:#2a2a2a;"><i>Local Project Tags</i></div>
<div class="abs" style="left:1131px;top:482px;width:294.5px;height:19px;background:#f4f4f4"></div>
<div class="abs" style="left:1139px;top:485.5px;width:12px;height:12px;border-radius:2.5px;background:#fff;box-shadow:0 0 0 0.5px #d0d0d0"></div>
<svg class="abs" style="left:1166px;top:486.5px" width="8" height="10" viewBox="0 0 8 10"><path d="M2.5 1.5L6 5 2.5 8.5" fill="none" stroke="#555" stroke-width="1.1"/></svg>
<div class="t" style="left:1180px;top:485.7px;font-size:11.6px;color:#2a2a2a;"><i>Cross Project Tags</i></div>
<div class="abs" style="left:1131px;top:501px;width:294.5px;height:19px;background:#fff"></div>
<div class="abs" style="left:1139px;top:504.5px;width:12px;height:12px;border-radius:2.5px;background:#fff;box-shadow:0 0 0 0.5px #d0d0d0"></div>
<svg class="abs" style="left:1166px;top:505.5px" width="8" height="10" viewBox="0 0 8 10"><path d="M2.5 1.5L6 5 2.5 8.5" fill="none" stroke="#555" stroke-width="1.1"/></svg>
<div class="t" style="left:1180px;top:504.7px;font-size:11.6px;color:#2a2a2a;">Love</div>
<div class="abs" style="left:1131px;top:520px;width:294.5px;height:19px;background:#f4f4f4"></div>
<div class="abs" style="left:1139px;top:523.5px;width:12px;height:12px;border-radius:2.5px;background:#fff;box-shadow:0 0 0 0.5px #d0d0d0"></div>
<svg class="abs" style="left:1166px;top:524.5px" width="8" height="10" viewBox="0 0 8 10"><path d="M2.5 1.5L6 5 2.5 8.5" fill="none" stroke="#555" stroke-width="1.1"/></svg>
<div class="t" style="left:1180px;top:523.7px;font-size:11.6px;color:#2a2a2a;">Like</div>
<div class="abs" style="left:1131px;top:539px;width:294.5px;height:19px;background:#fff"></div>
<div class="abs" style="left:1139px;top:542.5px;width:12px;height:12px;border-radius:2.5px;background:#fff;box-shadow:0 0 0 0.5px #d0d0d0"></div>
<svg class="abs" style="left:1166px;top:543.5px" width="8" height="10" viewBox="0 0 8 10"><path d="M2.5 1.5L6 5 2.5 8.5" fill="none" stroke="#555" stroke-width="1.1"/></svg>
<div class="t" style="left:1180px;top:542.7px;font-size:11.6px;color:#2a2a2a;">Correct</div>
<div class="abs" style="left:1131px;top:558px;width:294.5px;height:19px;background:#f4f4f4"></div>
<div class="abs" style="left:1139px;top:561.5px;width:12px;height:12px;border-radius:2.5px;background:#fff;box-shadow:0 0 0 0.5px #d0d0d0"></div>
<svg class="abs" style="left:1166px;top:562.5px" width="8" height="10" viewBox="0 0 8 10"><path d="M2.5 1.5L6 5 2.5 8.5" fill="none" stroke="#555" stroke-width="1.1"/></svg>
<div class="t" style="left:1180px;top:561.7px;font-size:11.6px;color:#2a2a2a;">Flags</div>
<div class="abs" style="left:1131px;top:577px;width:294.5px;height:19px;background:#fff"></div>
<div class="abs" style="left:1139px;top:580.5px;width:12px;height:12px;border-radius:2.5px;background:#fff;box-shadow:0 0 0 0.5px #d0d0d0"></div>
<svg class="abs" style="left:1166px;top:581.5px" width="8" height="10" viewBox="0 0 8 10"><path d="M2.5 1.5L6 5 2.5 8.5" fill="none" stroke="#555" stroke-width="1.1"/></svg>
<div class="t" style="left:1180px;top:580.7px;font-size:11.6px;color:#2a2a2a;">Detailed Tasks</div>
<div class="abs" style="left:1131px;top:596px;width:294.5px;height:19px;background:#f4f4f4"></div>
<div class="abs" style="left:1139px;top:599.5px;width:12px;height:12px;border-radius:2.5px;background:#fff;box-shadow:0 0 0 0.5px #d0d0d0"></div>
<svg class="abs" style="left:1166px;top:600.5px" width="8" height="10" viewBox="0 0 8 10"><path d="M2.5 1.5L6 5 2.5 8.5" fill="none" stroke="#555" stroke-width="1.1"/></svg>
<div class="t" style="left:1180px;top:599.7px;font-size:11.6px;color:#2a2a2a;">Context</div>
<div class="abs" style="left:1132px;top:624.5px;width:79px;height:21.5px;border-radius:2px;background:#fbfbfb;border:1px solid #b8b8b8"></div>
<div class="t" style="left:1140px;top:629.7px;font-size:11.6px;color:#222;">Add Tag Set</div>
<div class="abs" style="left:1219px;top:624.5px;width:55px;height:21.5px;border-radius:2px;background:#f2f2f2;border:1px solid #d8d8d8"></div>
<div class="t" style="left:1225px;top:629.7px;font-size:11.6px;color:#b4b4b4;">Add Tag</div>
<div class="abs" style="left:1282.5px;top:624.5px;width:54.5px;height:21.5px;border-radius:2px;background:#f2f2f2;border:1px solid #d8d8d8"></div>
<div class="t" style="left:1292px;top:629.7px;font-size:11.6px;color:#b4b4b4;">Delete</div>
<div class="abs" style="left:1119px;top:701px;width:321px;height:1px;background:#d6d6d6"></div>
<div class="t" style="left:1132.5px;top:717.7px;font-size:12.7px;color:#262626;font-weight:bold">Dates</div>
<div class="abs" style="left:1389.1px;top:715.7px;width:15.0px;height:15.0px;border-radius:50%;background:#fff;box-shadow:0 0.5px 1.5px rgba(0,0,0,0.3)"></div><div class="t" style="left:1389.1px;top:716.7px;width:15.0px;text-align:center;font-size:12px;color:#333">?</div>
<svg class="abs" style="left:1414.8px;top:719.5px" width="10" height="8" viewBox="0 0 10 8"><path d="M1.5 2.5L5 6l3.5-3.5" fill="none" stroke="#c4c4c4" stroke-width="1.2"/></svg>
<div class="abs" style="left:1130px;top:743.9px;width:12px;height:12px;border-radius:3px;background:#3a82f2"></div><svg class="abs" style="left:1130px;top:743.9px" width="12" height="12" viewBox="0 0 12 12"><path d="M2.8 6.2l2.2 2.4 4.3-5.2" fill="none" stroke="#fff" stroke-width="1.6"/></svg>
<div class="t" style="left:1146px;top:744.1px;font-size:11.7px;color:#2a2a2a;">Start</div>
<div class="abs" style="left:1187px;top:741px;width:132px;height:18.5px;border-radius:0px;background:#fff;box-shadow:0 0.5px 1px rgba(0,0,0,0.2)"></div>
<div class="t" style="left:1195.5px;top:743.1px;font-size:11.7px;color:#2a2a2a;">9/11/2020, 12:00 AM</div>
<div class="abs" style="left:1322px;top:740.5px;width:11px;height:18px;border-radius:4px;background:#fff;box-shadow:0 0 0 0.5px rgba(0,0,0,0.1),0 0.5px 1px rgba(0,0,0,0.18)"></div><svg class="abs" style="left:1322px;top:740.5px" width="11" height="18" viewBox="0 0 11 18"><path d="M3 6.5l2.5-2.5 2.5 2.5M3 11.5l2.5 2.5 2.5-2.5" fill="none" stroke="#333" stroke-width="1.1"/></svg>
<svg class="abs" style="left:1340.5px;top:743.5px" width="13" height="12" viewBox="0 0 13 12"><rect x="0.5" y="1.0" width="1.8" height="1.8" fill="#666"/><rect x="0.5" y="3.6" width="1.8" height="1.8" fill="#666"/><rect x="0.5" y="6.2" width="1.8" height="1.8" fill="#666"/><rect x="0.5" y="8.8" width="1.8" height="1.8" fill="#666"/><rect x="3.0" y="1.0" width="1.8" height="1.8" fill="#666"/><rect x="3.0" y="3.6" width="1.8" height="1.8" fill="#666"/><rect x="3.0" y="6.2" width="1.8" height="1.8" fill="#666"/><rect x="3.0" y="8.8" width="1.8" height="1.8" fill="#666"/><rect x="5.5" y="1.0" width="1.8" height="1.8" fill="#666"/><rect x="5.5" y="3.6" width="1.8" height="1.8" fill="#666"/><rect x="5.5" y="6.2" width="1.8" height="1.8" fill="#666"/><rect x="5.5" y="8.8" width="1.8" height="1.8" fill="#666"/><rect x="8.0" y="1.0" width="1.8" height="1.8" fill="#666"/><rect x="8.0" y="3.6" width="1.8" height="1.8" fill="#666"/><rect x="8.0" y="6.2" width="1.8" height="1.8" fill="#666"/><rect x="8.0" y="8.8" width="1.8" height="1.8" fill="#666"/><rect x="10.5" y="1.0" width="1.8" height="1.8" fill="#666"/><rect x="10.5" y="3.6" width="1.8" height="1.8" fill="#666"/><rect x="10.5" y="6.2" width="1.8" height="1.8" fill="#666"/><rect x="10.5" y="8.8" width="1.8" height="1.8" fill="#666"/><rect x="0.5" y="0" width="12" height="1" fill="#666"/></svg>
<svg class="abs" style="left:1361.4px;top:741.7px" width="14.6" height="14.6" viewBox="0 0 14.6 14.6"><circle cx="7.3" cy="7.3" r="6.3" fill="none" stroke="#666" stroke-width="1"/><circle cx="4.3" cy="7.3" r="0.9" fill="#666"/><circle cx="7.3" cy="7.3" r="0.9" fill="#666"/><circle cx="10.3" cy="7.3" r="0.9" fill="#666"/></svg>
<div class="abs" style="left:1151px;top:769px;width:268px;height:16px;border-radius:4px;background:#fff;box-shadow:0 0 0 0.5px rgba(0,0,0,0.12),0 0.5px 1px rgba(0,0,0,0.18);"></div>
<div class="t" style="left:1149.5px;top:771.2px;width:70px;text-align:center;font-size:11.6px;color:#2a2a2a;">Today</div>
<div class="t" style="left:1216.5px;top:771.2px;width:70px;text-align:center;font-size:11.6px;color:#2a2a2a;">+1 Day</div>
<div class="t" style="left:1283.5px;top:771.2px;width:70px;text-align:center;font-size:11.6px;color:#2a2a2a;">+1 Week</div>
<div class="t" style="left:1350.5px;top:771.2px;width:70px;text-align:center;font-size:11.6px;color:#2a2a2a;">+1 Month</div>
<div class="abs" style="left:1218px;top:772px;width:1px;height:9px;background:#dedede"></div>
<div class="abs" style="left:1285px;top:772px;width:1px;height:9px;background:#dedede"></div>
<div class="abs" style="left:1352px;top:772px;width:1px;height:9px;background:#dedede"></div>
<div class="abs" style="left:1151px;top:796px;width:268px;height:16.5px;border-radius:4px;background:#fff;box-shadow:0 0 0 0.5px rgba(0,0,0,0.12),0 0.5px 1px rgba(0,0,0,0.18);"></div>
<div class="t" style="left:1157px;top:798.6px;font-size:11.7px;color:#2a2a2a;">Manually Specified</div>
<div class="abs" style="left:1404.5px;top:797.5px;width:12.5px;height:13.5px;border-radius:3px;background:#3a82f2"></div>
<svg class="abs" style="left:1404.5px;top:797.5px" width="12.5" height="13.5" viewBox="0 0 12.5 13.5"><path d="M3.8 5.3l2.45-2.3 2.45 2.3M3.8 8.2l2.45 2.3 2.45-2.3" fill="none" stroke="#fff" stroke-width="1.2"/></svg>
<div class="abs" style="left:1130px;top:821px;width:300px;height:1px;background:#d6d6d6"></div>
<div class="abs" style="left:1130px;top:836.7px;width:12px;height:12px;border-radius:3px;background:#3a82f2"></div><svg class="abs" style="left:1130px;top:836.7px" width="12" height="12" viewBox="0 0 12 12"><path d="M2.8 6.2l2.2 2.4 4.3-5.2" fill="none" stroke="#fff" stroke-width="1.6"/></svg>
<div class="t" style="left:1146px;top:837.1px;font-size:11.7px;color:#2a2a2a;">Due</div>
<div class="abs" style="left:1187px;top:834px;width:132px;height:18.5px;border-radius:0px;background:#fcfcfc;box-shadow:0 0.5px 1px rgba(0,0,0,0.14)"></div>
<div class="t" style="left:1195.5px;top:836.1px;font-size:11.7px;color:#b8b8b8;">9/18/2020, 12:00 AM</div>
<div class="abs" style="left:1322px;top:833.5px;width:11px;height:18px;border-radius:4px;background:#fff;box-shadow:0 0 0 0.5px rgba(0,0,0,0.1),0 0.5px 1px rgba(0,0,0,0.18)"></div><svg class="abs" style="left:1322px;top:833.5px" width="11" height="18" viewBox="0 0 11 18"><path d="M3 6.5l2.5-2.5 2.5 2.5M3 11.5l2.5 2.5 2.5-2.5" fill="none" stroke="#bbb" stroke-width="1.1"/></svg>
<svg class="abs" style="left:1340.5px;top:836.5px" width="13" height="12" viewBox="0 0 13 12"><rect x="0.5" y="1.0" width="1.8" height="1.8" fill="#999"/><rect x="0.5" y="3.6" width="1.8" height="1.8" fill="#999"/><rect x="0.5" y="6.2" width="1.8" height="1.8" fill="#999"/><rect x="0.5" y="8.8" width="1.8" height="1.8" fill="#999"/><rect x="3.0" y="1.0" width="1.8" height="1.8" fill="#999"/><rect x="3.0" y="3.6" width="1.8" height="1.8" fill="#999"/><rect x="3.0" y="6.2" width="1.8" height="1.8" fill="#999"/><rect x="3.0" y="8.8" width="1.8" height="1.8" fill="#999"/><rect x="5.5" y="1.0" width="1.8" height="1.8" fill="#999"/><rect x="5.5" y="3.6" width="1.8" height="1.8" fill="#999"/><rect x="5.5" y="6.2" width="1.8" height="1.8" fill="#999"/><rect x="5.5" y="8.8" width="1.8" height="1.8" fill="#999"/><rect x="8.0" y="1.0" width="1.8" height="1.8" fill="#999"/><rect x="8.0" y="3.6" width="1.8" height="1.8" fill="#999"/><rect x="8.0" y="6.2" width="1.8" height="1.8" fill="#999"/><rect x="8.0" y="8.8" width="1.8" height="1.8" fill="#999"/><rect x="10.5" y="1.0" width="1.8" height="1.8" fill="#999"/><rect x="10.5" y="3.6" width="1.8" height="1.8" fill="#999"/><rect x="10.5" y="6.2" width="1.8" height="1.8" fill="#999"/><rect x="10.5" y="8.8" width="1.8" height="1.8" fill="#999"/><rect x="0.5" y="0" width="12" height="1" fill="#999"/></svg>
<svg class="abs" style="left:1361.4px;top:834.7px" width="14.6" height="14.6" viewBox="0 0 14.6 14.6"><circle cx="7.3" cy="7.3" r="6.3" fill="none" stroke="#666" stroke-width="1"/><circle cx="4.3" cy="7.3" r="0.9" fill="#666"/><circle cx="7.3" cy="7.3" r="0.9" fill="#666"/><circle cx="10.3" cy="7.3" r="0.9" fill="#666"/></svg>
<div class="abs" style="left:1151px;top:862px;width:268px;height:16px;border-radius:4px;background:#fff;box-shadow:0 0 0 0.5px rgba(0,0,0,0.1),0 0.5px 1px rgba(0,0,0,0.12)"></div>
<div class="t" style="left:1149.5px;top:864.2px;width:70px;text-align:center;font-size:11.6px;color:#b8b8b8;">Start Date</div>
<div class="t" style="left:1216.5px;top:864.2px;width:70px;text-align:center;font-size:11.6px;color:#b8b8b8;">+1 Day</div>
<div class="t" style="left:1283.5px;top:864.2px;width:70px;text-align:center;font-size:11.6px;color:#b8b8b8;">+1 Week</div>
<div class="t" style="left:1350.5px;top:864.2px;width:70px;text-align:center;font-size:11.6px;color:#b8b8b8;">+1 Month</div>
<div class="abs" style="left:1218px;top:865px;width:1px;height:9px;background:#e4e4e4"></div>
<div class="abs" style="left:1285px;top:865px;width:1px;height:9px;background:#e4e4e4"></div>
<div class="abs" style="left:1352px;top:865px;width:1px;height:9px;background:#e4e4e4"></div>
<div class="abs" style="left:1151px;top:889px;width:268px;height:16px;border-radius:4px;background:#fff;box-shadow:0 0 0 0.5px rgba(0,0,0,0.12),0 0.5px 1px rgba(0,0,0,0.18);"></div>
<div class="t" style="left:1157px;top:891.6px;font-size:11.7px;color:#2a2a2a;">Start Date + Duration</div>
<div class="abs" style="left:1404.5px;top:890.5px;width:12.5px;height:13.5px;border-radius:3px;background:#3a82f2"></div>
<svg class="abs" style="left:1404.5px;top:890.5px" width="12.5" height="13.5" viewBox="0 0 12.5 13.5"><path d="M3.8 5.3l2.45-2.3 2.45 2.3" fill="none" stroke="#fff" stroke-width="1.2"/></svg>
</div>
</div>
</body></html>
